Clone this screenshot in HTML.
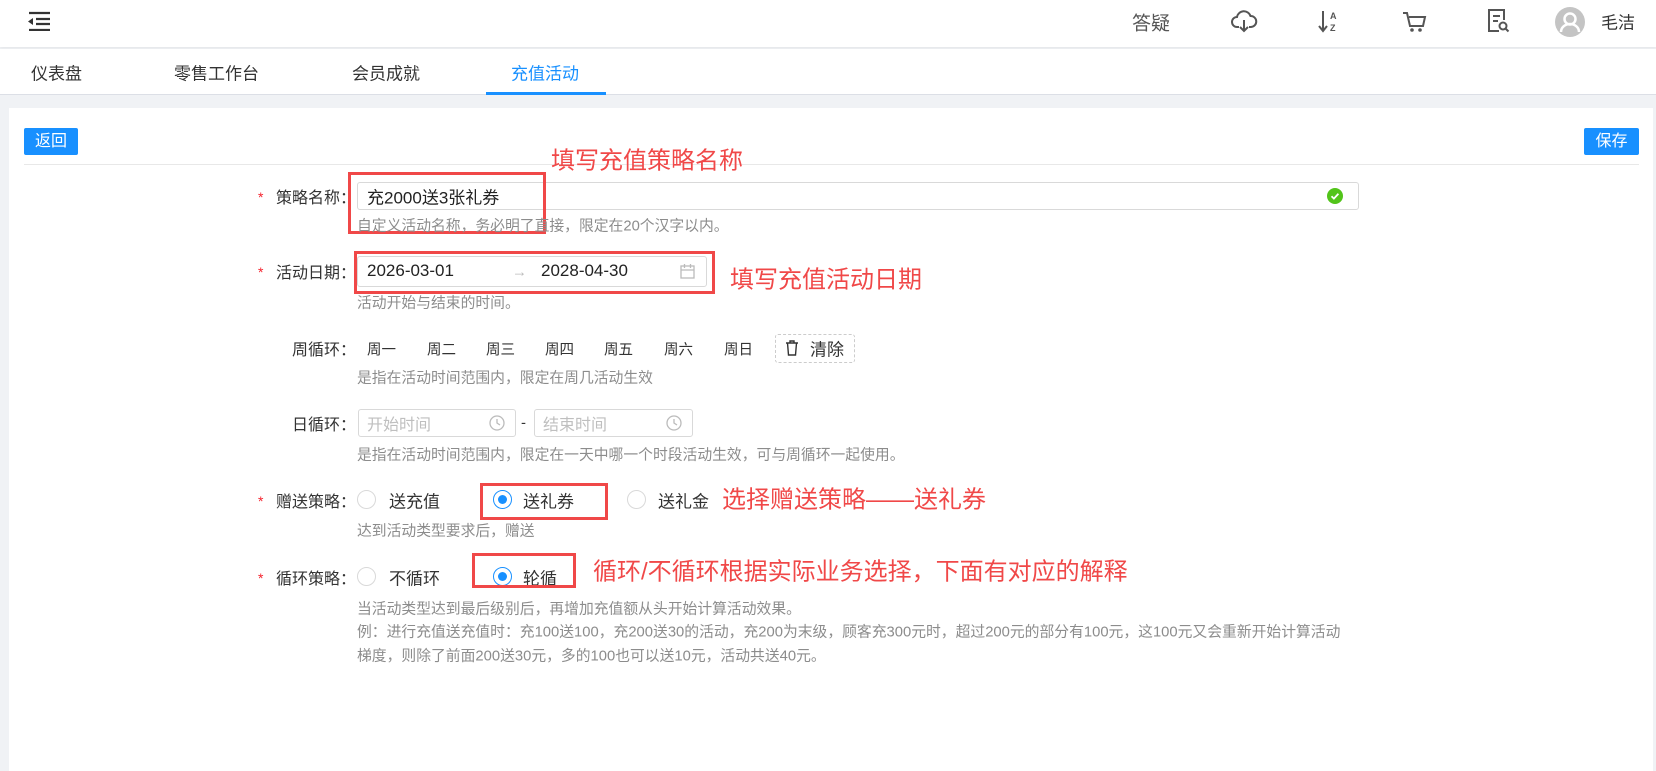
<!DOCTYPE html>
<html><head><meta charset="utf-8"><style>
*{margin:0;padding:0;box-sizing:border-box}
body{width:1656px;height:771px;overflow:hidden;background:#f0f2f5;font-family:"Liberation Sans","Noto Sans CJK SC",sans-serif;color:#333;position:relative}
.a{position:absolute;white-space:nowrap}
.c{transform:translateY(-50%)}
.hdr{position:absolute;left:0;top:0;width:1656px;height:47px;background:#fff;box-shadow:0 1px 3px rgba(0,0,0,.06)}
.tabs{position:absolute;left:0;top:49px;width:1656px;height:46px;background:#fff;border-bottom:1px solid #dcdfe6}
.panel{position:absolute;left:9px;top:108px;width:1644px;height:663px;background:#fff}
.btn{position:absolute;background:#1890ff;color:#fff;font-size:16px;border-radius:2px;text-align:center;line-height:27px}
.lbl{font-size:16px;color:#333;right:1300px;text-align:right;z-index:2}
.star{color:#f5222d;font-size:14px}
.hint{font-size:14.8px;color:#8c8c8c}
.inp{position:absolute;border:1px solid #d9d9d9;border-radius:3px;background:#fff}
.red{position:absolute;border:3px solid #f04848}
.ann{font-size:24px;color:#f04848}
.radio{position:absolute;width:19px;height:19px;border:1px solid #d9d9d9;border-radius:50%;background:#fff}
.radio.on{border-color:#1890ff}
.radio.on::after{content:"";position:absolute;left:4px;top:4px;width:9px;height:9px;border-radius:50%;background:#1890ff}
.day{font-size:14.5px;color:#333}
.opt{font-size:17px}
</style></head><body>
<div class="hdr"></div>
<svg class="a" style="left:26px;top:11px" width="25" height="20" viewBox="0 0 25 20"><path d="M3 2h21M10 8h14M10 13h14M3 19h21" stroke="#333" stroke-width="2.2"/><path d="M2 10.5l5-3.5v7z" fill="#333"/></svg>
<div class="a c" style="left:1132px;top:22px;font-size:19px;color:#555">答疑</div>
<svg class="a" style="left:1230px;top:10px" width="28" height="24" viewBox="0 0 28 24"><path d="M9 17H7a5 5 0 0 1 0-10 7 7 0 0 1 13.5-1A5.5 5.5 0 0 1 21 17h-2" fill="none" stroke="#555" stroke-width="2"/><path d="M14 10v11M10 17l4 4 4-4" fill="none" stroke="#555" stroke-width="2"/></svg>
<svg class="a" style="left:1318px;top:8px" width="22" height="28" viewBox="0 0 22 28"><path d="M5 3v19M1 18l4 5 4-5" fill="none" stroke="#555" stroke-width="2"/><text x="12" y="11" font-size="9" font-weight="bold" fill="#555" font-family="Liberation Sans">A</text><text x="12" y="23" font-size="9" font-weight="bold" fill="#555" font-family="Liberation Sans">Z</text></svg>
<svg class="a" style="left:1401px;top:9px" width="26" height="26" viewBox="0 0 26 26"><path d="M2 4h4l3 13h13l2-9H8" fill="none" stroke="#555" stroke-width="2"/><circle cx="11" cy="21" r="1.8" fill="#555"/><circle cx="19" cy="21" r="1.8" fill="#555"/></svg>
<svg class="a" style="left:1486px;top:7px" width="24" height="28" viewBox="0 0 24 28"><path d="M13 24H3V3h15v10" fill="none" stroke="#555" stroke-width="2"/><path d="M7 9h7M7 14h5" stroke="#555" stroke-width="2"/><circle cx="17" cy="19" r="3.5" fill="none" stroke="#555" stroke-width="2"/><path d="M19.5 21.5l3 3" stroke="#555" stroke-width="2"/></svg>
<svg class="a" style="left:1555px;top:7px" width="30" height="30" viewBox="0 0 30 30"><circle cx="15" cy="15" r="15" fill="#c4c4c4"/><circle cx="15" cy="12" r="5.5" fill="none" stroke="#fff" stroke-width="2.5"/><path d="M6 25a9 8 0 0 1 18 0" fill="none" stroke="#fff" stroke-width="2.5"/></svg>
<div class="a c" style="left:1601px;top:21px;font-size:17px;color:#333">毛洁</div>

<div class="tabs"></div>
<div class="a c" style="left:31px;top:72px;font-size:17px">仪表盘</div>
<div class="a c" style="left:174px;top:72px;font-size:17px">零售工作台</div>
<div class="a c" style="left:352px;top:72px;font-size:17px">会员成就</div>
<div class="a c" style="left:511px;top:72px;font-size:17px;color:#1890ff">充值活动</div>
<div class="a" style="left:486px;top:92px;width:120px;height:3px;background:#1890ff"></div>

<div class="panel"></div>
<div class="btn" style="left:24px;top:128px;width:54px;height:27px">返回</div>
<div class="btn" style="left:1584px;top:128px;width:55px;height:27px">保存</div>
<div class="a" style="left:24px;top:164px;width:1615px;height:1px;background:#e8e8e8"></div>

<div class="a c ann" style="left:551px;top:158px">填写充值策略名称</div>
<div class="inp" style="left:357px;top:182px;width:1002px;height:28px"></div>
<div class="a c star" style="left:258px;top:197px">*</div>
<div class="a c lbl" style="top:196px">策略名称：</div>
<div class="a c" style="left:367px;top:196px;font-size:17px;color:#222">充2000送3张礼券</div>
<svg class="a" style="left:1327px;top:188px" width="16" height="16" viewBox="0 0 16 16"><circle cx="8" cy="8" r="8" fill="#52c41a"/><path d="M4.5 8.2l2.4 2.4 4.5-4.8" fill="none" stroke="#fff" stroke-width="1.8"/></svg>
<div class="red" style="left:348px;top:172px;width:198px;height:62px"></div>
<div class="a c hint" style="left:357px;top:225px">自定义活动名称，务必明了直接，限定在20个汉字以内。</div>

<div class="inp" style="left:357px;top:256px;width:350px;height:31px"></div>
<div class="a c star" style="left:258px;top:272px">*</div>
<div class="a c lbl" style="top:271px">活动日期：</div>
<div class="a c" style="left:367px;top:271px;font-size:17px;color:#222">2026-03-01</div>
<div class="a c" style="left:512px;top:272px;font-size:15px;color:#bbb">→</div>
<div class="a c" style="left:541px;top:271px;font-size:17px;color:#222">2028-04-30</div>
<svg class="a" style="left:680px;top:263px" width="15" height="16" viewBox="0 0 15 16"><rect x="1" y="3" width="13" height="12" fill="none" stroke="#bbb" stroke-width="1.3"/><path d="M1 7h13M4.5 1v4M10.5 1v4" stroke="#bbb" stroke-width="1.3"/></svg>
<div class="red" style="left:354px;top:251px;width:361px;height:43px"></div>
<div class="a c ann" style="left:730px;top:277px">填写充值活动日期</div>
<div class="a c hint" style="left:357px;top:302px">活动开始与结束的时间。</div>

<div class="a c lbl" style="top:348px">周循环：</div>
<div class="a c day" style="left:367px;top:349px">周一</div>
<div class="a c day" style="left:427px;top:349px">周二</div>
<div class="a c day" style="left:486px;top:349px">周三</div>
<div class="a c day" style="left:545px;top:349px">周四</div>
<div class="a c day" style="left:604px;top:349px">周五</div>
<div class="a c day" style="left:664px;top:349px">周六</div>
<div class="a c day" style="left:724px;top:349px">周日</div>
<div class="a" style="left:775px;top:334px;width:80px;height:29px;border:1px dashed #ccc;border-radius:3px"></div>
<svg class="a" style="left:785px;top:340px" width="14" height="16" viewBox="0 0 14 16"><path d="M1 3h12M5 3V1h4v2M2.5 3l1 12h7l1-12" fill="none" stroke="#333" stroke-width="1.4"/></svg>
<div class="a c" style="left:810px;top:348px;font-size:17px;color:#333">清除</div>
<div class="a c hint" style="left:357px;top:377px">是指在活动时间范围内，限定在周几活动生效</div>

<div class="inp" style="left:358px;top:409px;width:158px;height:28px"></div>
<div class="a c lbl" style="top:423px">日循环：</div>
<div class="a c" style="left:367px;top:423px;font-size:16px;color:#bfbfbf">开始时间</div>
<svg class="a" style="left:489px;top:415px" width="16" height="16" viewBox="0 0 16 16"><circle cx="8" cy="8" r="7" fill="none" stroke="#bbb" stroke-width="1.3"/><path d="M8 4v4l3 2" fill="none" stroke="#bbb" stroke-width="1.3"/></svg>
<div class="a c" style="left:521px;top:423px;font-size:15px;color:#333">-</div>
<div class="inp" style="left:534px;top:409px;width:159px;height:28px"></div>
<div class="a c" style="left:543px;top:423px;font-size:16px;color:#bfbfbf">结束时间</div>
<svg class="a" style="left:666px;top:415px" width="16" height="16" viewBox="0 0 16 16"><circle cx="8" cy="8" r="7" fill="none" stroke="#bbb" stroke-width="1.3"/><path d="M8 4v4l3 2" fill="none" stroke="#bbb" stroke-width="1.3"/></svg>
<div class="a c hint" style="left:357px;top:454px">是指在活动时间范围内，限定在一天中哪一个时段活动生效，可与周循环一起使用。</div>

<div class="a c star" style="left:258px;top:501px">*</div>
<div class="a c lbl" style="top:500px">赠送策略：</div>
<div class="radio" style="left:357px;top:490px"></div>
<div class="a c opt" style="left:389px;top:500px">送充值</div>
<div class="radio on" style="left:493px;top:490px"></div>
<div class="a c opt" style="left:523px;top:500px">送礼券</div>
<div class="radio" style="left:627px;top:490px"></div>
<div class="a c opt" style="left:658px;top:500px">送礼金</div>
<div class="red" style="left:480px;top:483px;width:128px;height:37px"></div>
<div class="a c ann" style="left:722px;top:497px">选择赠送策略——送礼券</div>
<div class="a c hint" style="left:357px;top:530px">达到活动类型要求后，赠送</div>

<div class="a c star" style="left:258px;top:578px">*</div>
<div class="a c lbl" style="top:577px">循环策略：</div>
<div class="radio" style="left:357px;top:567px"></div>
<div class="a c opt" style="left:389px;top:577px">不循环</div>
<div class="radio on" style="left:493px;top:567px"></div>
<div class="a c opt" style="left:523px;top:577px">轮循</div>
<div class="red" style="left:472px;top:553px;width:104px;height:35px"></div>
<div class="a c ann" style="left:593px;top:569px">循环/不循环根据实际业务选择，下面有对应的解释</div>
<div class="a c hint" style="left:357px;top:608px">当活动类型达到最后级别后，再增加充值额从头开始计算活动效果。</div>
<div class="a c hint" style="left:357px;top:631px">例：进行充值送充值时：充100送100，充200送30的活动，充200为末级，顾客充300元时，超过200元的部分有100元，这100元又会重新开始计算活动</div>
<div class="a c hint" style="left:357px;top:655px">梯度，则除了前面200送30元，多的100也可以送10元，活动共送40元。</div>
</body></html>
